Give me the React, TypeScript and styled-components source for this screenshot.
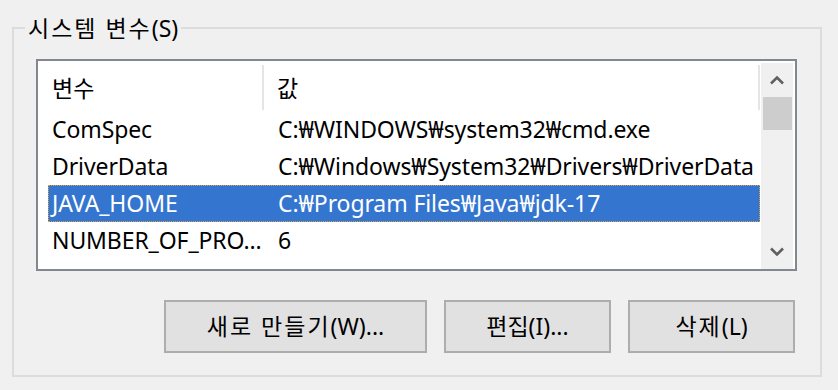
import React from "react";
import styled, { createGlobalStyle } from "styled-components";

const GlobalStyle = createGlobalStyle`
  html, body {
    margin: 0;
    padding: 0;
    background: #f0f0f0;
  }
  body {
    font-family: "Noto Sans", "Noto Sans CJK KR", sans-serif;
    font-size: 23px;
    color: #000;
  }
  * { box-sizing: border-box; }
`;

const Page = styled.div`
  width: 838px;
  height: 390px;
  padding: 0 16px 0 12px;
  background: #f0f0f0;
  overflow: hidden;
`;

const Group = styled.fieldset`
  margin: 13px 0 0 0;
  padding: 16px 23px 22px 22px;
  border: 2px solid #dcdcdc;
  min-width: 0;
`;

const Legend = styled.legend`
  margin-left: -11px;
  padding: 0 3px;
  line-height: 30px;
  height: 30px;
`;

const Hangul = styled.span`
  letter-spacing: 2px;
`;

const ListBox = styled.div`
  height: 212px;
  border: 2px solid #828790;
  background: #fff;
  display: grid;
  grid-template-columns: 1fr 32px;
  padding: 0 2px 0 0;
  overflow: hidden;
`;

const Table = styled.div`
  padding-left: 10px;
  padding-right: 1px;
  overflow: hidden;
`;

const HeaderRow = styled.div`
  display: grid;
  grid-template-columns: 216px 1fr;
  height: 50px;
  padding: 4px 0 1px;
`;

const HeaderCell = styled.div<{ $pad: number }>`
  display: flex;
  align-items: center;
  padding-left: ${(p) => p.$pad}px;
  padding-bottom: 2px;
  border-right: 2px solid #e5e5e5;
  white-space: nowrap;
`;

const Row = styled.div<{ $selected?: boolean }>`
  display: grid;
  grid-template-columns: 216px 1fr;
  height: 37px;
  align-items: center;
  white-space: nowrap;
  background: ${(p) => (p.$selected ? "#3476cf" : "transparent")};
  color: ${(p) => (p.$selected ? "#fff" : "#000")};
  outline: ${(p) => (p.$selected ? "1px dotted #e0a040" : "none")};
  outline-offset: -1px;
`;

const Cell = styled.div<{ $pad: number }>`
  padding-left: ${(p) => p.$pad}px;
  overflow: hidden;
  padding-bottom: 2px;
  line-height: 32px;
  letter-spacing: -0.1px;
`;

const ScrollBar = styled.div`
  margin-top: 2px;
  background: #f0f0f0;
  display: flex;
  flex-direction: column;
  align-items: center;
`;

const ArrowBox = styled.div`
  height: 34px;
  width: 100%;
  display: flex;
  align-items: center;
  justify-content: center;
`;

const Thumb = styled.div`
  width: 29px;
  height: 33px;
  background: #cdcdcd;
`;

const Track = styled.div`
  flex: 1;
`;

const ButtonRow = styled.div`
  display: flex;
  justify-content: flex-end;
  gap: 17px;
  margin-top: 29px;
  padding-right: 2px;
`;

const Button = styled.button<{ $w: number }>`
  width: ${(p) => p.$w}px;
  height: 53px;
  background: #e1e1e1;
  border: 2px solid #adadad;
  font-family: inherit;
  font-size: 23px;
  color: #000;
  padding: 0 0 3px;
`;

const Chevron = ({ up }: { up?: boolean }) => (
  <svg width="16" height="10" viewBox="0 0 16 10">
    <path
      d={up ? "M2 8.5 L8 2.5 L14 8.5" : "M2 1.5 L8 7.5 L14 1.5"}
      fill="none"
      stroke="#606060"
      strokeWidth="2.6"
    />
  </svg>
);

const rows = [
  { name: "ComSpec", value: "C:₩WINDOWS₩system32₩cmd.exe" },
  { name: "DriverData", value: "C:₩Windows₩System32₩Drivers₩DriverData" },
  { name: "JAVA_HOME", value: "C:₩Program Files₩Java₩jdk-17", selected: true },
  { name: "NUMBER_OF_PRO...", value: "6" },
];

export default function App() {
  return (
    <>
      <GlobalStyle />
      <Page>
        <Group>
          <Legend>
            <Hangul>시스템 변수</Hangul>(S)
          </Legend>
          <ListBox>
            <Table>
              <HeaderRow>
                <HeaderCell $pad={4}>변수</HeaderCell>
                <HeaderCell $pad={13}>값</HeaderCell>
              </HeaderRow>
              {rows.map((r) => (
                <Row key={r.name} $selected={r.selected}>
                  <Cell $pad={4}>{r.name}</Cell>
                  <Cell $pad={14}>{r.value}</Cell>
                </Row>
              ))}
            </Table>
            <ScrollBar>
              <ArrowBox>
                <Chevron up />
              </ArrowBox>
              <Thumb />
              <Track />
              <ArrowBox>
                <Chevron />
              </ArrowBox>
            </ScrollBar>
          </ListBox>
          <ButtonRow>
            <Button $w={263}>
              <Hangul>새로 만들기</Hangul>(W)...
            </Button>
            <Button $w={167}>편집(I)...</Button>
            <Button $w={167}>
              <Hangul>삭제</Hangul>(L)
            </Button>
          </ButtonRow>
        </Group>
      </Page>
    </>
  );
}
